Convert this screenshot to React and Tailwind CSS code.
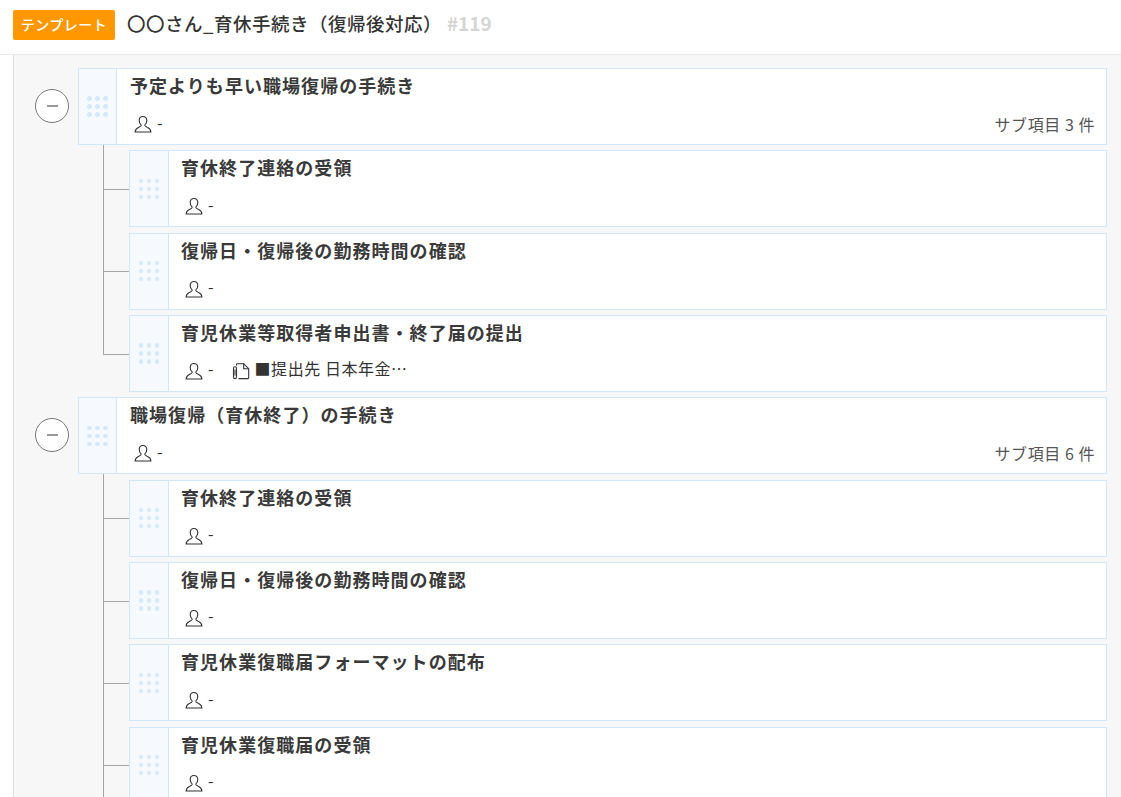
const CJK = "font-['Noto_Sans_CJK_JP','Noto_Sans',sans-serif]";

function PersonIcon() {
  return (
    <svg width="18" height="18" viewBox="0 0 18 18" fill="none" stroke="#333" strokeWidth="1.1" className="shrink-0">
      <path d="M9 1.500c-2.300 0-3.800 1.700-3.800 4 0 1.900.8 3.200 1.700 4.100.3.300.3.8.1 1.200-.4.7-1.500 1.300-3 1.900-1.600.6-2.600 1.600-2.900 4.300h15.800c-.3-2.700-1.300-3.700-2.900-4.300-1.500-.6-2.600-1.200-3-1.900-.2-.4-.2-.9.1-1.200.9-.9 1.700-2.200 1.700-4.100 0-2.300-1.500-4-3.800-4z" />
    </svg>
  );
}

function MemoIcon() {
  return (
    <svg width="18" height="18" viewBox="0 0 18 18" fill="none" stroke="#333" strokeWidth="1.1" className="shrink-0">
      <path d="M4.500 3.500V2.500c0-.5.3-.8.8-.8h6.400l5 5v9.100c0 .5-.3.8-.8.8H6.500" />
      <path d="M11.700 1.700v5h5" />
      <path d="M1.500 6.500c0-1 .7-1.700 1.500-1.700s1.500.7 1.500 1.700v8.200c0 1.200-.6 2-1.500 2s-1.500-.8-1.500-2z" />
      <path d="M3 7.500v6" />
    </svg>
  );
}

function Handle({ wide }) {
  return (
    <div className={`${wide ? "w-[39px]" : "w-[38px]"} shrink-0 flex items-center justify-center bg-[#f6faff] border-r border-[#cfe6fb]`}>
      <div className="grid grid-cols-3 gap-[3.5px]">
        {Array.from({ length: 9 }).map((_, i) => (
          <span key={i} className="w-[4.5px] h-[4.5px] rounded-full bg-[#d5e8fb]" />
        ))}
      </div>
    </div>
  );
}

function Card({ title, memo, count, wide }) {
  return (
    <div className="flex-1 min-w-0 h-[77px] flex bg-white border border-[#cfe6fb]">
      <Handle wide={wide} />
      <div className={`flex-1 min-w-0 flex flex-col ${wide ? "pl-[12px]" : "pl-[13px]"} pr-[11px]`}>
        <div className="mt-[1px] h-[30px] text-[18px] leading-[30px] font-bold tracking-[1.05px] text-[#3a3a3a]">
          {title}
        </div>
        <div className="mt-[9px] flex items-center h-[30px] text-[16px] text-[#333]">
          <span className="ml-[3.5px]"><PersonIcon /></span>
          <span className="ml-[5.5px] -mt-[5px]">-</span>
          {memo && (
            <>
              <span className="ml-[18px]"><MemoIcon /></span>
              <span className="ml-[5px] -mt-[5px] tracking-[0.55px]">{memo}</span>
            </>
          )}
          {count && (
            <span className="ml-auto tracking-[0.55px] text-[#555]">サブ項目 {count} 件</span>
          )}
        </div>
      </div>
    </div>
  );
}

function ChildRow({ title, memo, last }) {
  return (
    <div className="flex">
      {/* connector */}
      <div className="ml-[25px] w-[26px] shrink-0 flex flex-col">
        <div className="h-[45px] border-l border-b border-[#a5a5a5]" />
        {!last && <div className="flex-1 border-l border-[#a5a5a5]" />}
      </div>
      <div className="flex-1 min-w-0 pt-[5.33px]">
        <Card title={title} memo={memo} wide />
      </div>
    </div>
  );
}

function Group({ title, count, items, open }) {
  return (
    <div className="mb-[5.33px]">
      <div className="flex -ml-[64px]">
        <div className="w-[64px] shrink-0 flex items-center pl-[21px]">
          <div className="w-[34px] h-[34px] -mt-[1px] rounded-full border-[1.5px] border-[#777] bg-white flex items-center justify-center">
            <span className="w-[11px] h-[2px] bg-[#999]" />
          </div>
        </div>
        <Card title={title} count={count} />
      </div>
      <div>
        {items.map((item, i) => (
          <ChildRow key={i} title={item.title} memo={item.memo} last={!open && i === items.length - 1} />
        ))}
      </div>
    </div>
  );
}

const group1 = [
  { title: "育休終了連絡の受領" },
  { title: "復帰日・復帰後の勤務時間の確認" },
  { title: "育児休業等取得者申出書・終了届の提出", memo: "■提出先 日本年金…" },
];

const group2 = [
  { title: "育休終了連絡の受領" },
  { title: "復帰日・復帰後の勤務時間の確認" },
  { title: "育児休業復職届フォーマットの配布" },
  { title: "育児休業復職届の受領" },
];

export default function App() {
  return (
    <div className={`h-[797px] overflow-hidden bg-white flex flex-col ${CJK}`}>
      <header className="h-[55px] shrink-0 flex items-start pl-[13px] pt-[10px] bg-white border-b border-[#e8e8e8]">
        <span className="w-[102px] h-[30px] flex items-center justify-center rounded-[2px] bg-[#ff9800] text-white text-[14px] leading-[28px] font-medium tracking-[0.5px] pb-[2px]">
          テンプレート
        </span>
        <h1 className="ml-[12px] -mt-[1.5px] text-[18.5px] leading-[28px] font-medium tracking-[0.5px] text-[#333]">
          〇〇さん_育休手続き（復帰後対応）
        </h1>
        <span className="ml-[5px] -mt-[1.5px] text-[19px] leading-[28px] font-bold text-[#d5d5d5]">#119</span>
      </header>
      <div className="flex-1 min-h-0 overflow-hidden ml-[13px] bg-[#f7f7f7] border-l border-[#ddd] pt-[13px] pl-[64px] pr-[14px]">
        <Group title="予定よりも早い職場復帰の手続き" count={3} items={group1} />
        <Group title="職場復帰（育休終了）の手続き" count={6} items={group2} open />
      </div>
    </div>
  );
}
